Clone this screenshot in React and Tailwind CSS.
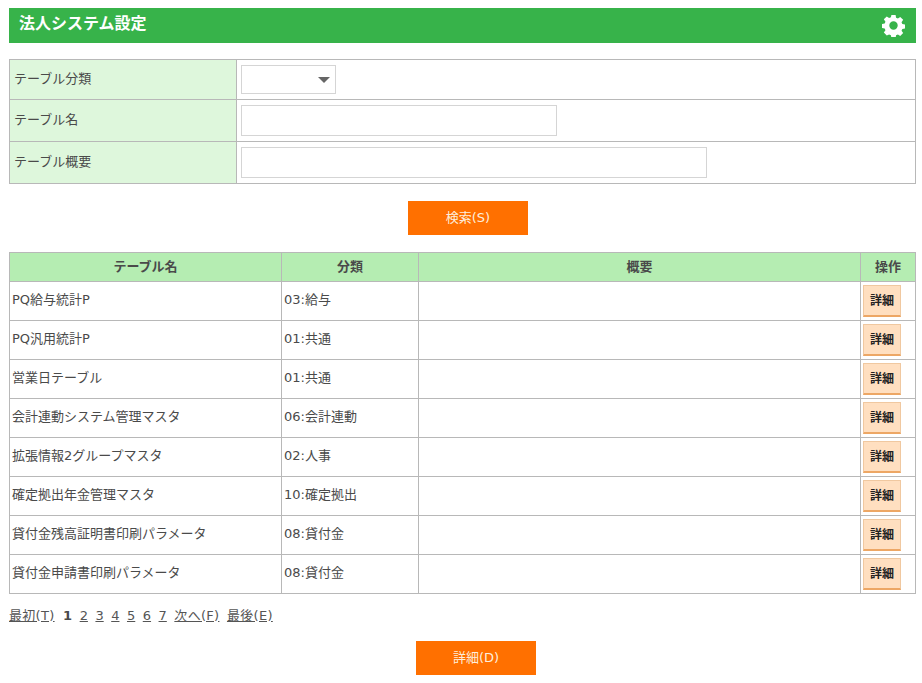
import React from "react";

const rows = [
  ["PQ給与統計P", "03:給与"],
  ["PQ汎用統計P", "01:共通"],
  ["営業日テーブル", "01:共通"],
  ["会計連動システム管理マスタ", "06:会計連動"],
  ["拡張情報2グループマスタ", "02:人事"],
  ["確定拠出年金管理マスタ", "10:確定拠出"],
  ["貸付金残高証明書印刷パラメータ", "08:貸付金"],
  ["貸付金申請書印刷パラメータ", "08:貸付金"],
];

const pages = ["2", "3", "4", "5", "6", "7"];

const GearIcon = () => (
  <svg width="23" height="23" viewBox="0 0 24 24" className="text-white">
    <path
      fill="currentColor"
      fillRule="evenodd"
      d="M9.8 1h4.400l.5 2.900 1.900.8 2.400-1.700 3.100 3.100-1.700 2.400.8 1.900 2.800.5v4.200l-2.800.5-.8 1.900 1.700 2.400-3.100 3.100-2.400-1.700-1.900.8-.5 2.900H9.800l-.5-2.900-1.900-.8L5 22.500l-3.100-3.100 1.700-2.400-.8-1.900L0 14.600v-4.200l2.800-.5.8-1.900L1.900 5.600 5 2.500l2.400 1.700 1.900-.8zM12 7.600a4.400 4.400 0 1 0 0 8.800 4.400 4.400 0 0 0 0-8.800z"
    />
  </svg>
);

const ActionButton = ({ children, className }) => (
  <button className={`block h-[34px] w-[120px] bg-[#ff7000] text-[13px] text-[#fdeedd] ${className}`}>{children}</button>
);

const PageLink = ({ children, className = "" }) => <a className={`underline text-[#555555] ${className}`}>{children}</a>;

const App = () => {
  return (
    <div className="w-[922px] h-[683px] overflow-hidden bg-white pl-[9px] pr-[6px] pt-2 text-[13px] text-[#4a4a4a] font-['DejaVu_Sans','Noto_Sans_CJK_JP',sans-serif]">
      <div className="h-[35px] bg-[#37b34a] flex items-center justify-between pl-[10px] pr-[11px]">
        <h1 className="text-[16px] font-bold text-white -mt-[3px]">法人システム設定</h1>
        <GearIcon />
      </div>

      <table className="mt-4 w-full border-collapse table-fixed">
        <colgroup>
          <col className="w-[227px]" />
          <col />
        </colgroup>
        <tbody>
          <tr className="h-[40px]">
            <th className="border border-[#b8b8b8] bg-[#def7dc] pl-1 pb-[2px] text-left font-normal">テーブル分類</th>
            <td className="border border-[#b8b8b8] pl-1">
              <div className="relative w-[95px] h-[29px] border border-[#d5d5d5]">
                <span className="absolute left-[76px] top-[11px] border-x-[6px] border-t-[6px] border-x-transparent border-t-[#666666]" />
              </div>
            </td>
          </tr>
          <tr className="h-[42px]">
            <th className="border border-[#b8b8b8] bg-[#def7dc] pl-1 pb-[2px] text-left font-normal">テーブル名</th>
            <td className="border border-[#b8b8b8] pl-1">
              <div className="w-[316px] h-[31px] border border-[#d5d5d5]" />
            </td>
          </tr>
          <tr className="h-[42px]">
            <th className="border border-[#b8b8b8] bg-[#def7dc] pl-1 pb-[2px] text-left font-normal">テーブル概要</th>
            <td className="border border-[#b8b8b8] pl-1">
              <div className="w-[466px] h-[31px] border border-[#d5d5d5]" />
            </td>
          </tr>
        </tbody>
      </table>

      <div className="mt-[17px]">
        <ActionButton className="ml-[399px]">検索(S)</ActionButton>
      </div>

      <table className="mt-[17px] w-full border-collapse table-fixed">
        <colgroup>
          <col className="w-[272px]" />
          <col className="w-[137px]" />
          <col />
          <col className="w-[55px]" />
        </colgroup>
        <thead>
          <tr className="h-[29px] bg-[#b5edb2]">
            <th className="border border-[#b8b8b8] font-bold">テーブル名</th>
            <th className="border border-[#b8b8b8] font-bold">分類</th>
            <th className="border border-[#b8b8b8] font-bold">概要</th>
            <th className="border border-[#b8b8b8] font-bold">操作</th>
          </tr>
        </thead>
        <tbody>
          {rows.map((row) => (
            <tr key={row[0]} className="h-[39px]">
              <td className="border border-[#b8b8b8] pl-[2px] pb-[2px]">{row[0]}</td>
              <td className="border border-[#b8b8b8] pl-[2px] pb-[2px]">{row[1]}</td>
              <td className="border border-[#b8b8b8]"></td>
              <td className="border border-[#b8b8b8] pl-[2px]">
                <button className="block w-[38px] h-[32px] bg-[#ffdfc0] border border-[#f0c8a0] border-b-2 border-b-[#eda765] text-[12px] font-bold text-[#222222]">
                  詳細
                </button>
              </td>
            </tr>
          ))}
        </tbody>
      </table>

      <div className="mt-[11px] h-[20px] flex items-center gap-[7.5px] leading-none">
        <PageLink className="tracking-[0.3px]">最初(T)</PageLink>
        <b className="font-bold ml-[1px]">1</b>
        {pages.map((p) => (
          <PageLink key={p}>{p}</PageLink>
        ))}
        <PageLink className="tracking-[0.3px]">次へ(F)</PageLink>
        <PageLink className="tracking-[0.3px]">最後(E)</PageLink>
      </div>

      <div className="mt-[16px]">
        <ActionButton className="ml-[407px]">詳細(D)</ActionButton>
      </div>
    </div>
  );
};

export default App;
